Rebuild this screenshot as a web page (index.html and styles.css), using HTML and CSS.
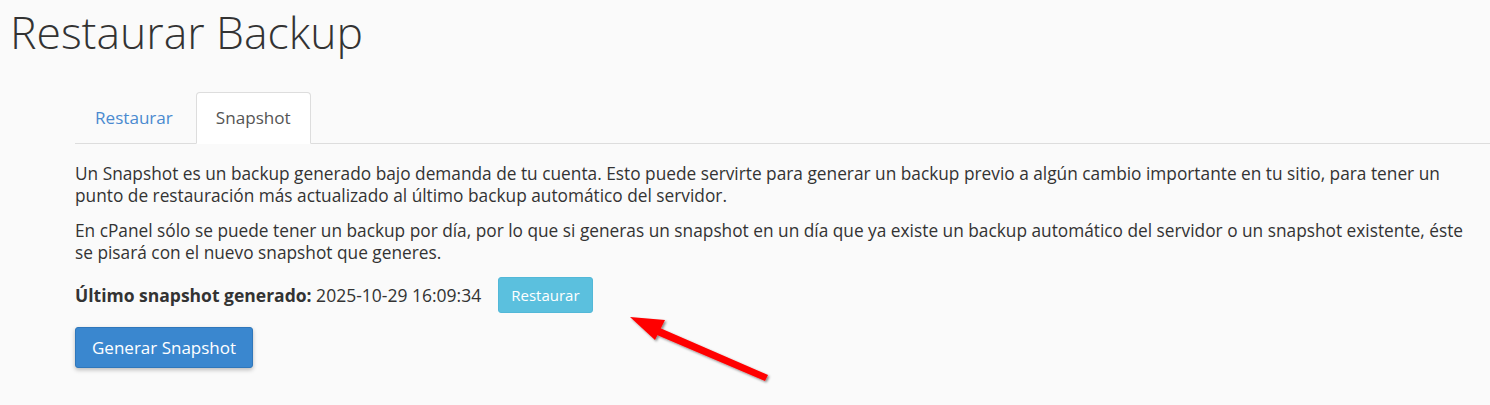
FILE: index.html
```html
<!DOCTYPE html>
<html lang="es">
<head>
<meta charset="utf-8">
<title>Restaurar Backup</title>
<link rel="stylesheet" href="styles.css">
</head>
<body>
<h1 class="title">Restaurar Backup</h1>
<div class="content">
  <ul class="tabs">
    <li class="tab"><a href="#">Restaurar</a></li>
    <li class="tab active"><a href="#">Snapshot</a></li>
  </ul>
  <div class="pane">
    <p>Un Snapshot es un backup generado bajo demanda de tu cuenta. Esto puede servirte para generar un backup previo a algún cambio importante en tu sitio, para tener un punto de restauración más actualizado al último backup automático del servidor.</p>
    <p>En cPanel sólo se puede tener un backup por día, por lo que si generas un snapshot en un día que ya existe un backup automático del servidor o un snapshot existente, éste se pisará con el nuevo snapshot que generes.</p>
    <div class="last-row">
      <span><strong>Último snapshot generado:</strong> 2025-10-29 16:09:34</span>
      <button class="btn btn-info">Restaurar</button>
    </div>
    <button class="btn btn-primary">Generar Snapshot</button>
  </div>
</div>
<svg class="arrow" width="160" height="80" viewBox="0 0 160 80">
  <defs>
    <filter id="sh" x="-20%" y="-20%" width="140%" height="140%">
      <feDropShadow dx="1.5" dy="1.5" stdDeviation="1.2" flood-color="#000" flood-opacity="0.45"/>
    </filter>
  </defs>
  <g filter="url(#sh)" fill="#ff0000">
    <polygon points="10,12 45,15 35,35"/>
    <polygon points="33,20 148,70 145,76 30,27"/>
  </g>
</svg>
</body>
</html>
```
FILE: styles.css
```css
html, body {
  margin: 0;
  padding: 0;
  background: #fafafa;
  font-family: "Open Sans", "Noto Sans", sans-serif;
  color: #333;
}
body {
  position: relative;
  width: 1490px;
  height: 405px;
  overflow: hidden;
}
.title {
  margin: 0;
  padding: 2px 0 0 10px;
  font-weight: 300;
  font-size: 44.5px;
  line-height: 60px;
  color: #333;
}
.content {
  padding-left: 75px;
  margin-top: 30px;
}
.tabs {
  display: flex;
  list-style: none;
  margin: 0;
  padding: 0;
  border-bottom: 1px solid #ddd;
}
.tab {
  margin-right: 3px;
  margin-bottom: -1px;
}
.tab a {
  display: block;
  padding: 14px 19px;
  line-height: 22px;
  font-size: 17.1px;
  color: #4a8ad0;
  text-decoration: none;
  border: 1px solid transparent;
  border-radius: 4px 4px 0 0;
}
.tab.active a {
  color: #555;
  background: #fff;
  border-color: #ddd #ddd transparent;
}
.pane {
  padding-top: 19px;
}
.pane p {
  margin: 0 0 13px;
  font-size: 17.3px;
  line-height: 22px;
  padding-right: 20px;
}
.last-row {
  display: flex;
  align-items: center;
  gap: 17px;
  font-size: 17.5px;
  line-height: 22px;
  margin-bottom: 14px;
}
.btn {
  font-family: "Open Sans", "Noto Sans", sans-serif;
  color: #fff;
  border-radius: 3px;
  cursor: pointer;
}
.btn-info {
  background: #5bc0de;
  border: 1px solid #52b8d8;
  font-size: 15px;
  line-height: 20px;
  padding: 7px 12px;
}
.btn-primary {
  background: #3a87cf;
  border: 1px solid #2f77bb;
  font-size: 17px;
  line-height: 23px;
  padding: 8px 16px;
  box-shadow: 0 2px 4px rgba(0,0,0,0.25);
}
.arrow {
  position: absolute;
  left: 620px;
  top: 305px;
}
```
